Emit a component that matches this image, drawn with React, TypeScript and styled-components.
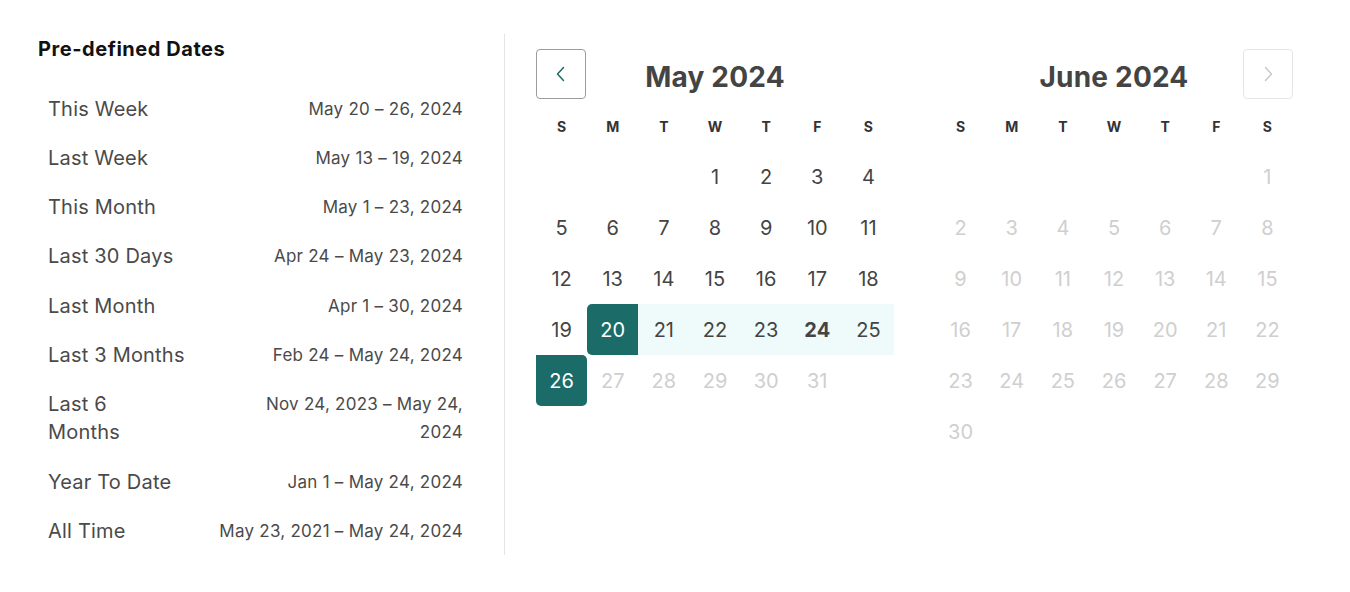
import styled, { createGlobalStyle } from 'styled-components';

const GlobalStyle = createGlobalStyle`
  body {
    margin: 0;
    background: #fff;
    font-family: Inter, "Noto Sans", "Liberation Sans", sans-serif;
    color: #444;
  }
`;

const TEAL = '#1b6b68';

type DayVariant = 'normal' | 'disabled' | 'start' | 'end' | 'range';

interface Day {
  n: number;
  variant: DayVariant;
  bold?: boolean;
}

const PRESETS: { label: string; range: string }[] = [
  { label: 'This Week', range: 'May 20 – 26, 2024' },
  { label: 'Last Week', range: 'May 13 – 19, 2024' },
  { label: 'This Month', range: 'May 1 – 23, 2024' },
  { label: 'Last 30 Days', range: 'Apr 24 – May 23, 2024' },
  { label: 'Last Month', range: 'Apr 1 – 30, 2024' },
  { label: 'Last 3 Months', range: 'Feb 24 – May 24, 2024' },
  { label: 'Last 6 Months', range: 'Nov 24, 2023 – May 24, 2024' },
  { label: 'Year To Date', range: 'Jan 1 – May 24, 2024' },
  { label: 'All Time', range: 'May 23, 2021 – May 24, 2024' },
];

const WEEKDAYS = ['S', 'M', 'T', 'W', 'T', 'F', 'S'];

const mayDays: Day[] = Array.from({ length: 31 }, (_, i) => {
  const n = i + 1;
  let variant: DayVariant = 'normal';
  if (n === 20) variant = 'start';
  else if (n > 20 && n < 26) variant = 'range';
  else if (n === 26) variant = 'end';
  else if (n > 26) variant = 'disabled';
  return { n, variant, bold: n === 24 };
});

const juneDays: Day[] = Array.from({ length: 30 }, (_, i) => ({
  n: i + 1,
  variant: 'disabled',
}));

const Page = styled.div`
  display: flex;
  align-items: flex-start;
  padding: 34px 0 0 38px;
`;

const Sidebar = styled.aside`
  width: 425px;
  height: 521px;
  padding-right: 41px;
  border-right: 1px solid #e4e4e4;
`;

const SidebarTitle = styled.h2`
  margin: 0 0 21px;
  padding-top: 1px;
  font-size: 20px;
  line-height: 28px;
  font-weight: 700;
  color: #111;
  letter-spacing: 0.55px;
`;

const PresetList = styled.ul`
  list-style: none;
  margin: 0;
  padding: 0;
`;

const PresetRow = styled.li`
  display: flex;
  justify-content: space-between;
  align-items: flex-start;
  gap: 44px;
  padding: 10.65px 0 10.65px 10px;
  cursor: pointer;
`;

const PresetLabel = styled.span`
  font-size: 20px;
  line-height: 28px;
  color: #4a4a4a;
  letter-spacing: 0.2px;
`;

const PresetRange = styled.span`
  font-size: 17px;
  line-height: 28px;
  color: #4a4a4a;
  text-align: right;
  letter-spacing: 0.25px;
`;

const Calendars = styled.div`
  display: flex;
  gap: 41px;
  padding: 15px 0 0 31px;
`;

const Month = styled.section`
  width: 358px;
`;

const MonthHeader = styled.div`
  display: grid;
  grid-template-columns: 51px 1fr 51px;
  align-items: center;
  height: 50px;
  margin-bottom: 2px;
`;

const MonthTitle = styled.h3`
  grid-column: 2;
  grid-row: 1;
  margin: 0;
  padding-top: 6px;
  text-align: center;
  font-size: 28px;
  font-weight: 700;
  color: #444;
  letter-spacing: 0.2px;
`;

const NavButton = styled.button<{ $enabled: boolean; $side: 'left' | 'right' }>`
  grid-column: ${(p) => (p.$side === 'left' ? 1 : 3)};
  grid-row: 1;
  justify-self: ${(p) => (p.$side === 'left' ? 'start' : 'end')};
  display: flex;
  align-items: center;
  justify-content: center;
  width: 50px;
  height: 50px;
  padding: 0;
  background: #fff;
  border: 1px solid ${(p) => (p.$enabled ? '#9c9c9c' : '#e6e6e6')};
  border-radius: 4px;
  color: ${(p) => (p.$enabled ? TEAL : '#c9c9c9')};
  cursor: ${(p) => (p.$enabled ? 'pointer' : 'default')};
`;

const Grid = styled.div`
  display: grid;
  grid-template-columns: repeat(7, 1fr);
  grid-auto-rows: 51px;
`;

const WeekdayRow = styled(Grid)`
  grid-auto-rows: 50px;
`;

const Weekday = styled.div`
  display: flex;
  align-items: center;
  justify-content: center;
  font-size: 14px;
  font-weight: 700;
  color: #333;
`;

const DayCell = styled.div<{ $variant: DayVariant; $bold?: boolean }>`
  display: flex;
  align-items: center;
  justify-content: center;
  font-size: 20px;
  font-weight: ${(p) => (p.$bold ? 700 : 400)};
  color: ${(p) =>
    p.$variant === 'disabled'
      ? '#cfcfcf'
      : p.$variant === 'start' || p.$variant === 'end'
      ? '#fff'
      : '#444'};
  background: ${(p) =>
    p.$variant === 'start' || p.$variant === 'end'
      ? TEAL
      : p.$variant === 'range'
      ? '#effafa'
      : 'transparent'};
  border-radius: ${(p) =>
    p.$variant === 'start' ? '5px 0 0 5px' : p.$variant === 'end' ? '0 5px 5px 5px' : '0'};
`;

const Chevron = ({ dir }: { dir: 'left' | 'right' }) => (
  <svg width="16" height="16" viewBox="0 0 16 16" fill="none">
    <path
      d={dir === 'left' ? 'M10.5 1.5 L4.5 8 L10.5 14.5' : 'M5.5 1.5 L11.5 8 L5.5 14.5'}
      stroke="currentColor"
      strokeWidth="1.5"
      strokeLinecap="round"
      strokeLinejoin="round"
    />
  </svg>
);

const MonthView = ({
  title,
  offset,
  days,
  nav,
}: {
  title: string;
  offset: number;
  days: Day[];
  nav: 'left' | 'right';
}) => (
  <Month>
    <MonthHeader>
      <NavButton
        $side={nav}
        $enabled={nav === 'left'}
        aria-label={nav === 'left' ? 'Previous month' : 'Next month'}
      >
        <Chevron dir={nav} />
      </NavButton>
      <MonthTitle>{title}</MonthTitle>
    </MonthHeader>
    <WeekdayRow>
      {WEEKDAYS.map((w, i) => (
        <Weekday key={i}>{w}</Weekday>
      ))}
    </WeekdayRow>
    <Grid>
      {Array.from({ length: offset }, (_, i) => (
        <div key={`b${i}`} />
      ))}
      {days.map((d) => (
        <DayCell key={d.n} $variant={d.variant} $bold={d.bold}>
          {d.n}
        </DayCell>
      ))}
    </Grid>
  </Month>
);

export default function App() {
  return (
    <>
      <GlobalStyle />
      <Page>
        <Sidebar>
          <SidebarTitle>Pre-defined Dates</SidebarTitle>
          <PresetList>
            {PRESETS.map((p) => (
              <PresetRow key={p.label}>
                <PresetLabel>{p.label}</PresetLabel>
                <PresetRange>{p.range}</PresetRange>
              </PresetRow>
            ))}
          </PresetList>
        </Sidebar>
        <Calendars>
          <MonthView title="May 2024" offset={3} days={mayDays} nav="left" />
          <MonthView title="June 2024" offset={6} days={juneDays} nav="right" />
        </Calendars>
      </Page>
    </>
  );
}
